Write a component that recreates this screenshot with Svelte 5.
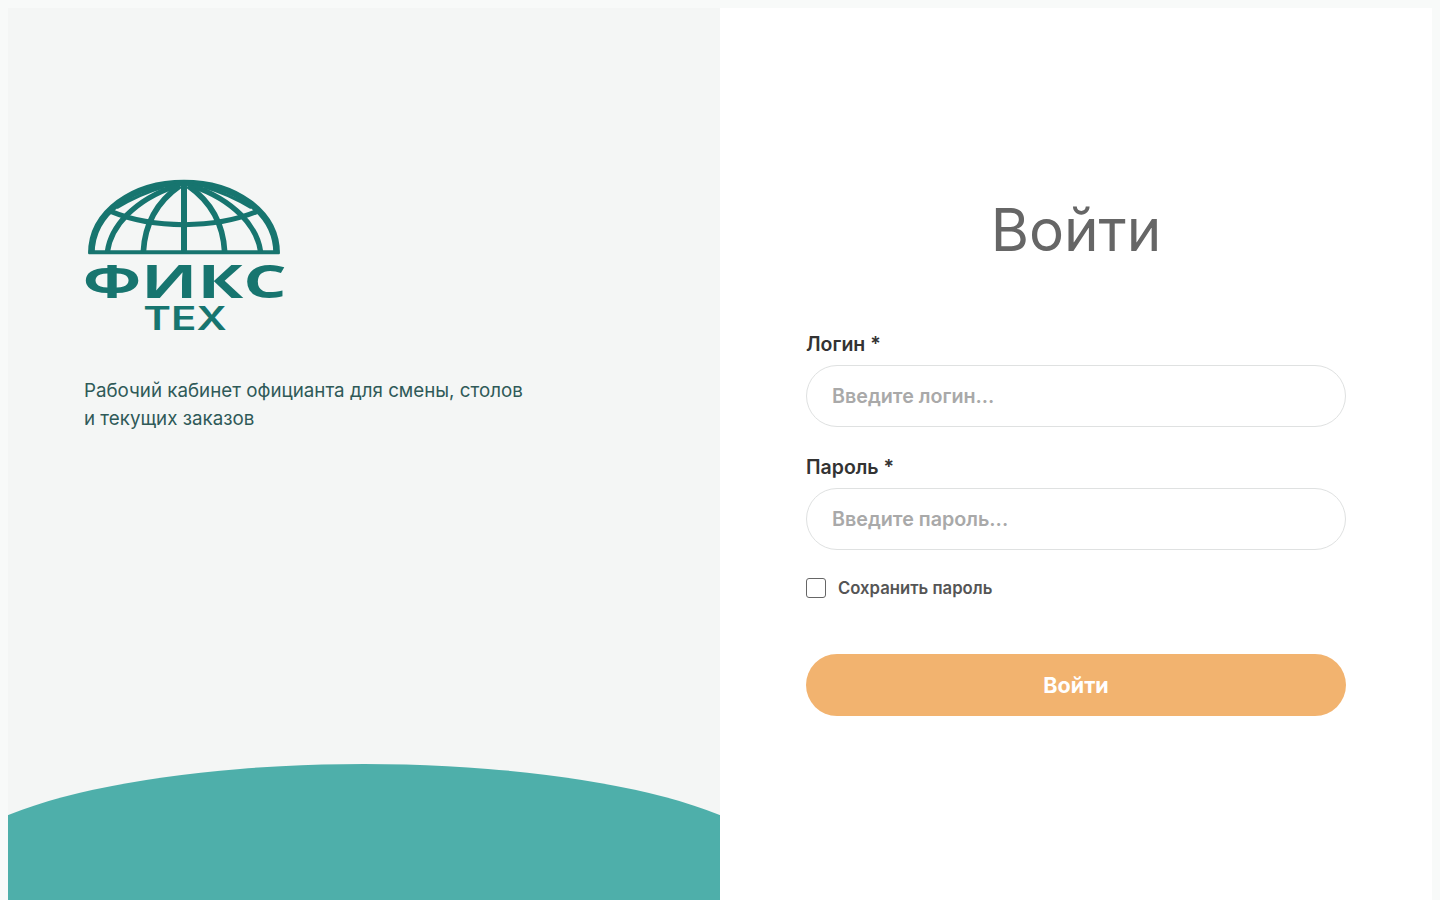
<script>
    let login = $state('');
    let password = $state('');
    let remember = $state(false);
</script>

<div class="page">
    <section class="intro">
        <div class="brand">
            <svg class="logo" viewBox="42 20 612 430" role="img" aria-label="Фикс Тех">
                <g fill="none" stroke="#17756f" stroke-linecap="butt">
                    <path stroke-width="20" d="M64 250C64 125 190 38 342 38C494 38 620 125 620 250" />
                    <path stroke-width="12" d="M56 246H628" />
                    <path stroke-width="16" d="M112 245C122 170 190 90 318 46" />
                    <path stroke-width="16" d="M572 245C562 170 494 90 366 46" />
                    <path stroke-width="17" d="M220 245C224 165 260 95 330 46" />
                    <path stroke-width="17" d="M464 245C460 165 424 95 354 46" />
                    <path stroke-width="18" d="M342 36V247" />
                    <path stroke-width="15" d="M124 124C250 176 434 176 560 124" />
                    <path stroke-width="10" d="M140 112C180 88 225 66 280 50" />
                    <path stroke-width="10" d="M544 112C504 88 459 66 404 50" />
                </g>
                <text class="logo-main" x="38" y="384" textLength="612" lengthAdjust="spacingAndGlyphs">ФИКС</text>
                <text class="logo-sub" x="220" y="478" textLength="250" lengthAdjust="spacingAndGlyphs">ТЕХ</text>
            </svg>
            <p class="tagline">Рабочий кабинет официанта для смены, столов<br />и текущих заказов</p>
        </div>
        <div class="wave"></div>
    </section>

    <main class="panel">
        <form class="form" onsubmit={(e) => e.preventDefault()}>
            <h1>Войти</h1>

            <label class="field">
                <span>Логин *</span>
                <input type="text" placeholder="Введите логин..." bind:value={login} />
            </label>

            <label class="field">
                <span>Пароль *</span>
                <input type="password" placeholder="Введите пароль..." bind:value={password} />
            </label>

            <label class="remember">
                <input type="checkbox" bind:checked={remember} />
                <span>Сохранить пароль</span>
            </label>

            <button type="submit">Войти</button>
        </form>
    </main>
</div>

<style>
    :global(body) {
        background: #f8faf9;
        font-family: Inter, "Noto Sans", sans-serif;
    }

    .page {
        box-sizing: border-box;
        display: grid;
        grid-template-columns: 1fr 1fr;
        height: 100vh;
        padding: 8px 8px 0;
        overflow: hidden;
    }

    .intro {
        position: relative;
        overflow: hidden;
        background: #f4f6f5;
    }

    .brand {
        padding: 169px 76px 0;
    }

    .logo {
        display: block;
        width: 204px;
        height: 143.3px;
        overflow: visible;
    }

    .logo-main {
        font-family: "Open Sans", sans-serif;
        font-weight: 700;
        font-size: 140px;
        fill: #17756f;
    }

    .logo-sub {
        font-family: Inter, sans-serif;
        font-weight: 600;
        font-size: 98px;
        fill: #17756f;
    }

    .tagline {
        margin: 57px 0 0;
        font-size: 18.75px;
        line-height: 28px;
        color: #2f5a58;
    }

    .wave {
        position: absolute;
        left: -10%;
        top: 756px;
        width: 120%;
        height: 228px;
        border-radius: 50%;
        background: #4eafaa;
    }

    .panel {
        background: #fff;
        display: flex;
        justify-content: center;
    }

    .form {
        width: 540px;
        padding-top: 188px;
        display: flex;
        flex-direction: column;
    }

    h1 {
        margin: 0 0 69px;
        font-size: 58.5px;
        font-weight: 400;
        line-height: 68px;
        text-align: center;
        color: #666;
    }

    .field {
        display: flex;
        flex-direction: column;
        gap: 10px;
        margin-bottom: 29px;
    }

    .field + .field {
        margin-bottom: 28px;
    }

    .field span {
        font-size: 19.5px;
        font-weight: 600;
        line-height: 22px;
        color: #333;
    }

    .field input {
        box-sizing: border-box;
        height: 62px;
        padding: 0 25px;
        border: 1px solid #dfe1e1;
        border-radius: 31px;
        font: 600 19.7px Inter, "Noto Sans", sans-serif;
        color: #333;
        outline: none;
    }

    .field input::placeholder {
        color: #a9a9a9;
        opacity: 1;
    }

    .remember {
        display: flex;
        align-items: center;
        gap: 12px;
        margin-bottom: 56px;
        font-size: 16.7px;
        font-weight: 600;
        line-height: 20px;
        color: #555;
    }

    .remember input {
        appearance: none;
        box-sizing: border-box;
        width: 20px;
        height: 20px;
        margin: 0;
        border: 1px solid #666;
        border-radius: 3px;
        background: #fff;
    }

    .remember input:checked {
        background: #f2b36f;
    }

    button {
        height: 62px;
        border: none;
        border-radius: 31px;
        background: #f2b36f;
        color: #fff;
        font: 700 21.5px Inter, "Noto Sans", sans-serif;
        cursor: pointer;
    }
</style>
